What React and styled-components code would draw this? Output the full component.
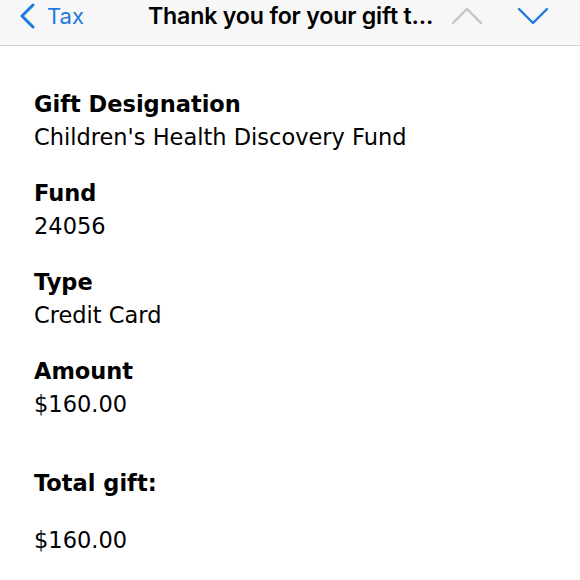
import React from 'react';
import styled, { createGlobalStyle } from 'styled-components';

const GlobalStyle = createGlobalStyle`
  html, body {
    margin: 0;
    padding: 0;
    background: #fff;
  }
`;

const fields = [
  { label: 'Gift Designation', value: "Children's Health Discovery Fund" },
  { label: 'Fund', value: '24056' },
  { label: 'Type', value: 'Credit Card' },
  { label: 'Amount', value: '$160.00' },
];

const App = () => (
  <>
    <GlobalStyle />
    <Page>
      <NavBar>
        <Back>
          <svg width="18" height="26" viewBox="0 0 18 26">
            <path d="M15 2 L4 13 L15 24" fill="none" stroke="#1d7ae2" strokeWidth="3" strokeLinecap="round" strokeLinejoin="round" />
          </svg>
          <BackLabel>Tax</BackLabel>
        </Back>
        <Title>Thank you for your gift t...</Title>
        <Arrows>
          <svg width="32" height="20" viewBox="0 0 32 20">
            <path d="M2 17 L16 3 L30 17" fill="none" stroke="#c4c4c4" strokeWidth="2.4" strokeLinecap="round" strokeLinejoin="round" />
          </svg>
          <svg width="32" height="20" viewBox="0 0 32 20">
            <path d="M2 3 L16 17 L30 3" fill="none" stroke="#1d7ae2" strokeWidth="2.4" strokeLinecap="round" strokeLinejoin="round" />
          </svg>
        </Arrows>
      </NavBar>
      <Body>
        {fields.map(f => (
          <Field key={f.label}>
            <Label>{f.label}</Label>
            <Value>{f.value}</Value>
          </Field>
        ))}
        <Total>
          <Label>Total gift:</Label>
          <Value>$160.00</Value>
        </Total>
      </Body>
    </Page>
  </>
);

export default App;

const Page = styled.div`
  width: 580px;
  height: 580px;
  overflow: hidden;
  background: #fff;
`;

const NavBar = styled.div`
  height: 46px;
  display: flex;
  align-items: center;
  background: #f7f7f7;
  border-bottom: 1px solid #cfcfcf;
  font-family: Inter, 'Liberation Sans', sans-serif;
  font-size: 22px;
  padding-left: 18px;
  box-sizing: border-box;
  padding-bottom: 13px;
`;

const Back = styled.div`
  display: flex;
  align-items: center;
  gap: 11px;
  width: 130px;
`;

const BackLabel = styled.span`
  color: #1d7ae2;
  font-weight: 400;
`;

const Title = styled.span`
  color: #000;
  font-weight: 600;
  font-size: 23.2px;
  letter-spacing: -0.2px;
  width: 303px;
  white-space: nowrap;
`;

const Arrows = styled.div`
  display: flex;
  align-items: center;
  gap: 34px;
  margin-top: -1px;
`;

const Body = styled.div`
  padding: 42px 34px 0;
  font-family: 'DejaVu Sans', Verdana, sans-serif;
  font-size: 22.5px;
  color: #000;
`;

const Field = styled.div`
  display: flex;
  flex-direction: column;
  margin-bottom: 23px;
`;

const Total = styled.div`
  display: flex;
  flex-direction: column;
  gap: 24px;
  margin-top: 46px;
`;

const Label = styled.div`
  font-weight: 700;
  line-height: 33px;
`;

const Value = styled.div`
  line-height: 33px;
`;
